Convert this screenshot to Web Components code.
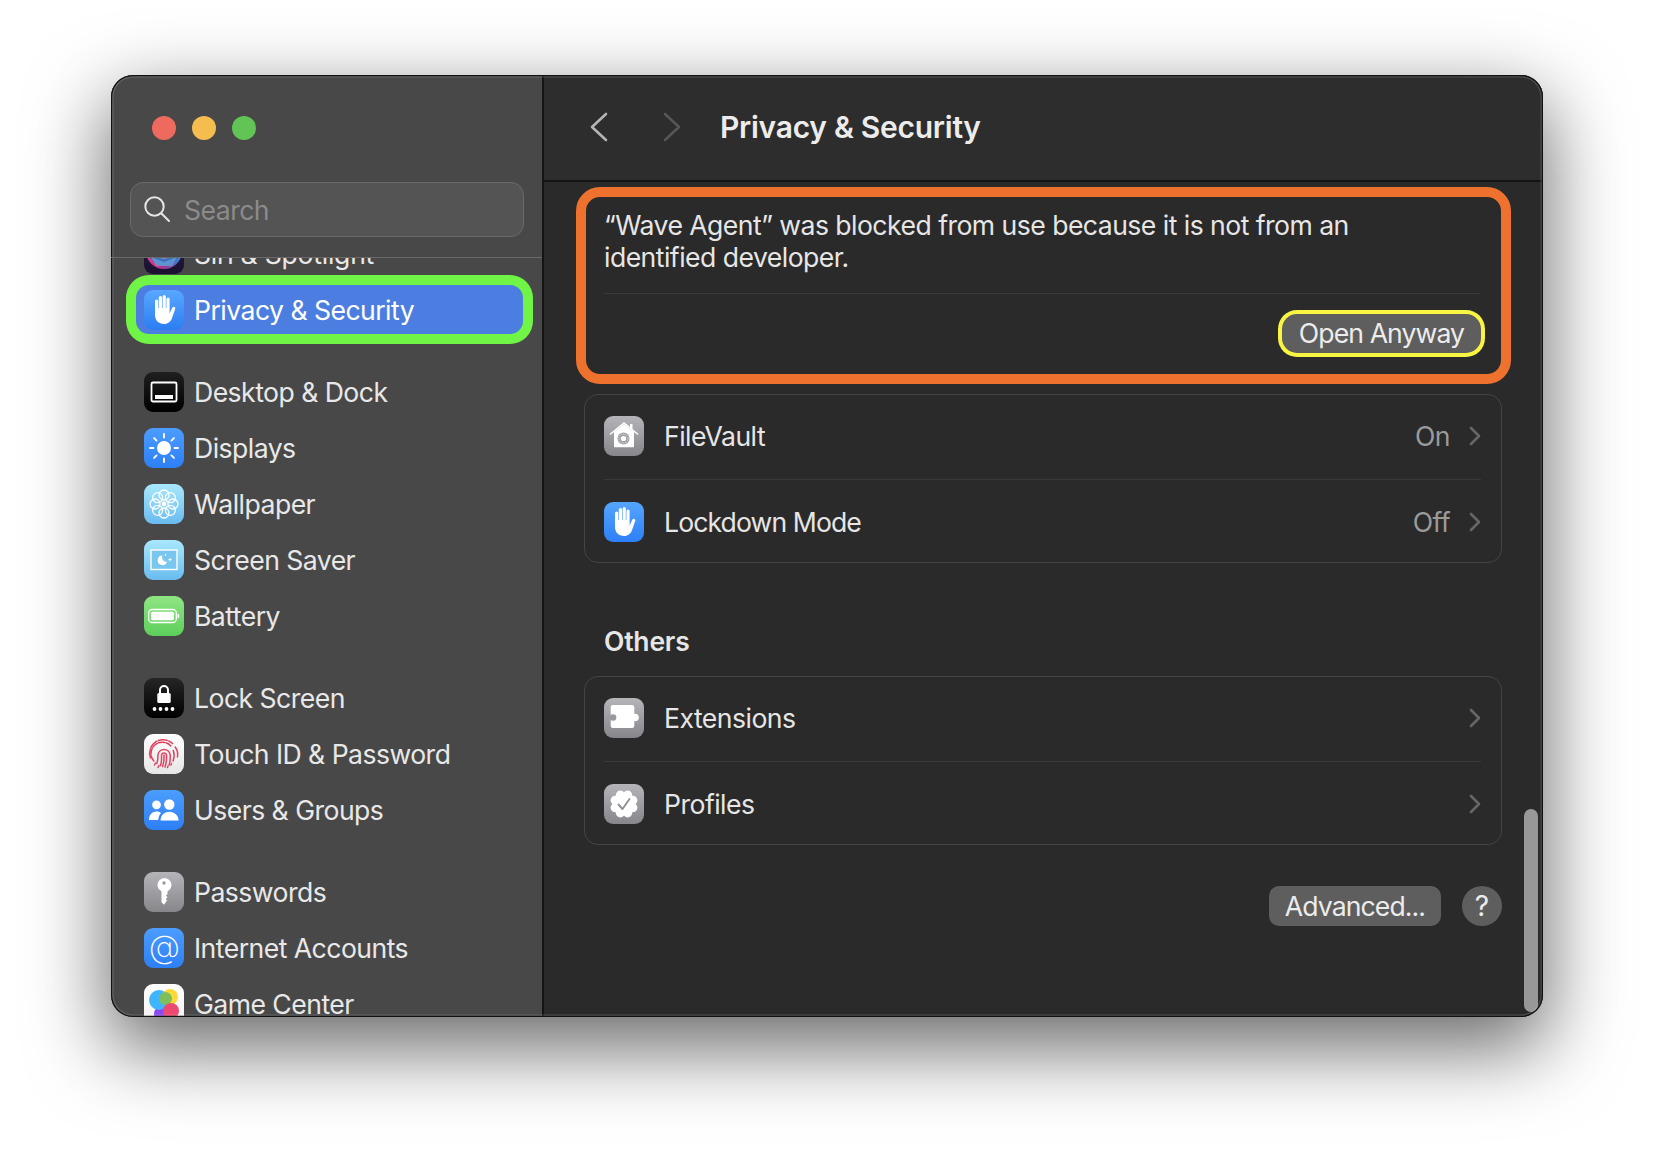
<!DOCTYPE html>
<html lang="en">
<head>
<meta charset="utf-8">
<title>Privacy &amp; Security</title>
<style>
  html, body { margin: 0; height: 100%; background: #fff; overflow: hidden; }
  body {
    font-family: Inter, "Liberation Sans", sans-serif;
    padding: 75px 0 0 111px;
    box-sizing: border-box;
  }
</style>
</head>
<body>
<mac-window>
  <settings-sidebar slot="sidebar">
    <side-group class="scrolled">
      <side-item icon="siri" style="letter-spacing:-.25px">Siri &amp; Spotlight</side-item>
      <side-item icon="hand" selected>Privacy &amp; Security</side-item>
    </side-group>
    <side-group>
      <side-item icon="desktop">Desktop &amp; Dock</side-item>
      <side-item icon="displays">Displays</side-item>
      <side-item icon="wallpaper">Wallpaper</side-item>
      <side-item icon="saver">Screen Saver</side-item>
      <side-item icon="battery">Battery</side-item>
    </side-group>
    <side-group>
      <side-item icon="lock">Lock Screen</side-item>
      <side-item icon="touch">Touch ID &amp; Password</side-item>
      <side-item icon="users">Users &amp; Groups</side-item>
    </side-group>
    <side-group>
      <side-item icon="key">Passwords</side-item>
      <side-item icon="at">Internet Accounts</side-item>
      <side-item icon="game">Game Center</side-item>
    </side-group>
  </settings-sidebar>

  <settings-pane slot="pane" heading="Privacy &amp; Security">
    <alert-card>
      <span slot="message">“Wave Agent” was blocked from use because it is not from an identified developer.</span>
      <push-button slot="action" ring style="letter-spacing:-.9px">Open Anyway</push-button>
    </alert-card>
    <pref-card>
      <pref-row icon="filevault" value="On">FileVault</pref-row>
      <pref-sep></pref-sep>
      <pref-row icon="handblue" value="Off" style="letter-spacing:-.9px">Lockdown Mode</pref-row>
    </pref-card>
    <section-title>Others</section-title>
    <pref-card>
      <pref-row icon="puzzle">Extensions</pref-row>
      <pref-sep></pref-sep>
      <pref-row icon="badge">Profiles</pref-row>
    </pref-card>
    <pane-footer>
      <push-button style="letter-spacing:-.9px">Advanced...</push-button>
      <help-button></help-button>
    </pane-footer>
  </settings-pane>
</mac-window>

<script>
// little helper, every element below is just a template + a shadow root
function makeTemplate(html) {
  const t = document.createElement('template')
  t.innerHTML = html
  return t
}

function simpleElement(name, html) {
  const template = makeTemplate(html)
  customElements.define(name, class extends HTMLElement {
    constructor() {
      super()
      this.attachShadow({ mode: 'open' })
      this.shadowRoot.appendChild(template.content.cloneNode(true))
    }
  })
}

const handPath = 'M11 19.5V11.2a1.6 1.6 0 0 1 3.2 0V18h.6V7.6a1.6 1.6 0 0 1 3.2 0V18h.6V6.6a1.6 1.6 0 0 1 3.2 0V18h.6V9a1.6 1.6 0 0 1 3.2 0V23.4l2.6-5.6c.9-1.9 3.7-.9 3 1.1l-3 8.6C27.1 31.6 24 34 20 34c-5.4 0-9-3.8-9-9z'

const flower = () => {
  let s = ''
  for (let i = 0; i < 8; i++) {
    const a = i * Math.PI / 4
    s += `<circle cx="${20 + 9 * Math.cos(a)}" cy="${20 + 9 * Math.sin(a)}" r="5" fill="none" stroke="#fff" stroke-width="1.3"/>`
  }
  return s + '<circle cx="20" cy="20" r="2.4" fill="#fff"/>'
}

const sunRays = () => {
  let s = ''
  for (let i = 0; i < 8; i++) {
    const a = i * Math.PI / 4
    const c = Math.cos(a), o = Math.sin(a)
    s += `<line x1="${20 + 10.5 * c}" y1="${20 + 10.5 * o}" x2="${20 + 14 * c}" y2="${20 + 14 * o}"/>`
  }
  return s
}

const scallop = () => {
  let s = ''
  for (let i = 0; i < 8; i++) {
    const a = i * Math.PI / 4 + Math.PI / 8
    s += `<circle cx="${20 + 9.5 * Math.cos(a)}" cy="${20 + 9.5 * Math.sin(a)}" r="4.6" fill="#fff"/>`
  }
  return s + '<circle cx="20" cy="20" r="10.5" fill="#fff"/>'
}

// concentric ridges, dashed so they break up like the real print
const fingerprint = `<g fill="none" stroke="#e2425f" stroke-width="1.5" stroke-linecap="round">
  <path d="M6.500 24a13.500 13.500 0 0 1 22-14.500" stroke-dasharray="9 1.600"/>
  <path d="M31.200 13a13.500 13.500 0 0 1 2.300 10"/>
  <path d="M9.800 27a10.600 10.600 0 0 1 17-15" stroke-dasharray="6 1.400"/>
  <path d="M29.300 16.500c1.200 3.500 1 7-.2 10.500"/>
  <path d="M12.800 29.500c1.300-3 1.100-5.500 1.100-8.500a6.200 6.200 0 0 1 12.300 0c.3 3.300 0 6.500-1.100 10"/>
  <path d="M16.500 31.500c1-3 1.200-6.500 1-10.500a2.600 2.600 0 0 1 5 0c.3 4-.2 8-1.500 12"/>
  <path d="M20 21c.2 4-.2 8-1.500 11.500M10.500 31l1-2M14 33.500l1-2M23.500 33.500l.5-1.500M27 31l.5-1.600"/>
</g>`

const blue = ['#4c9dff', '#2d7ff5']
const sky = ['#a9e8fc', '#69bcef']
const gray = ['#b4b4b9', '#86868b']

const ICONS = {
  siri: [['#2a1f44', '#1a1030'], `<defs><linearGradient id="siriEdge" x1="0" y1="0" x2="1" y2="0"><stop offset="0" stop-color="#e0388a"/><stop offset=".5" stop-color="#a4358f"/><stop offset="1" stop-color="#2f86d8"/></linearGradient></defs><circle cx="20" cy="17" r="16.500" fill="#3a6fc4" stroke="url(#siriEdge)" stroke-width="3"/><path d="M7 23l13 5 13-5-5 9H12z" fill="#7fb8d8" opacity=".5"/><circle cx="20" cy="17" r="8" fill="#8d8d95"/>`],
  hand: [['#58a8ff', '#2c7df2'], `<path d="${handPath}" fill="#fff"/>`],
  handblue: [['#55a5ff', '#2d7ff5'], `<path d="${handPath}" fill="#fff"/>`],
  desktop: [['#1f1f1f', '#000'], `<rect x="7.500" y="10.500" width="25" height="19" rx="1.500" fill="none" stroke="#fff" stroke-width="1.800"/><rect x="11" y="23" width="18" height="4" fill="#fff"/>`],
  displays: [blue, `<circle cx="20" cy="20" r="7" fill="#fff"/><g stroke="#fff" stroke-width="1.900" stroke-linecap="round">${sunRays()}</g>`],
  wallpaper: [sky, flower()],
  saver: [sky, `<rect x="7" y="10" width="26" height="19.500" fill="#79c6ee" stroke="#fff" stroke-width="1.400"/><path d="M18.500 15.500a4.800 4.800 0 1 0 4.500 6.300 4.500 4.500 0 0 1-4.500-6.300z" fill="#fff"/><path d="M26 17.500l.6 1.500 1.500.6-1.500.6-.6 1.500-.6-1.500-1.500-.6 1.500-.6zM21.500 13.500l.4 1 1 .4-1 .4-.4 1-.4-1-1-.4 1-.4z" fill="#fff"/>`],
  battery: [['#8fe583', '#5dcf5b'], `<rect x="4.700" y="13.500" width="27.600" height="13" rx="3.500" fill="none" stroke="#fff" stroke-width="1.300"/><rect x="7" y="15.700" width="23" height="8.600" rx="1.600" fill="#fff"/><rect x="33.500" y="17.700" width="1.600" height="4.600" rx=".8" fill="#fff"/>`],
  lock: [['#262626', '#000'], `<path d="M16 16v-4a4 4 0 0 1 8 0v4" fill="none" stroke="#fff" stroke-width="2"/><rect x="13.300" y="15" width="13.400" height="10" rx="1.500" fill="#fff"/><g fill="#fff"><circle cx="10.500" cy="31" r="1.900"/><circle cx="16.500" cy="31" r="1.900"/><circle cx="22.500" cy="31" r="1.900"/><circle cx="28.500" cy="31" r="1.900"/></g>`],
  touch: [['#ffffff', '#e6e6e6'], fingerprint],
  users: [blue, `<g fill="#fff"><circle cx="12.500" cy="14.800" r="4.400"/><circle cx="25.300" cy="14.500" r="5.200"/><path d="M5 30c0-5 3-8.500 7.500-8.500 1.800 0 3.300.5 4.500 1.500-1.700 1.800-2.700 4.300-2.700 7z"/><path d="M16.500 30.500c0-5 3.800-8.700 8.800-8.700s9.300 3.700 9.300 8.700z"/></g>`],
  key: [gray, `<path d="M20 6c4.100 0 7.500 3.100 7.500 7 0 2.700-1.600 5-4 6.200V22l-1.600 1.600 1.600 1.700-1.600 1.700 1.100 1.400-3 4.300-2.500-2.500V19.200c-2.400-1.200-4-3.500-4-6.200 0-3.900 3.400-7 7.500-7z" fill="#fff"/><circle cx="20" cy="11" r="1.700" fill="#9b9ba0"/>`],
  at: [blue, `<text x="20" y="30" text-anchor="middle" font-family="Inter, 'Liberation Sans', sans-serif" font-size="32" font-weight="200" fill="#fff">@</text>`],
  game: [['#ffffff', '#f2f2f2'], `<circle cx="18" cy="30" r="8" fill="#8a48ef"/><circle cx="15" cy="16" r="10" fill="#3fb4ff"/><circle cx="26" cy="13" r="8" fill="#ffd936"/><circle cx="21.500" cy="14.500" r="6.500" fill="#7dbf5c"/><circle cx="27" cy="27" r="8" fill="#ec4a70"/>`],
  filevault: [gray, `<path d="M10 16L20 8l10 8v14.500a.8.8 0 0 1-.8.8H10.800a.8.8 0 0 1-.8-.8z" fill="#fff"/><path d="M6.500 18L20 7l13.500 11" fill="none" stroke="#fff" stroke-width="1.600" stroke-linecap="round"/><rect x="26" y="8" width="2.500" height="5" fill="#fff"/><circle cx="19.500" cy="22.500" r="6" fill="#a0a0a5"/><circle cx="19.500" cy="22.500" r="2.600" fill="#fff"/><circle cx="19.500" cy="22.500" r="4.500" fill="none" stroke="#fff" stroke-width=".7" stroke-dasharray="1 1"/>`],
  puzzle: [gray, `<rect x="6.700" y="7" width="23.600" height="23" rx="2.200" fill="#fff"/><circle cx="31" cy="19.500" r="3.800" fill="#fff"/><circle cx="9" cy="19.500" r="3.300" fill="#98989d"/>`],
  badge: [gray, `${scallop()}<path d="M14.500 20.500l4 4.500 7-10" fill="none" stroke="#909095" stroke-width="1.900" stroke-linecap="round" stroke-linejoin="round"/>`]
}

let iconCount = 0

customElements.define('app-icon', class extends HTMLElement {
  constructor() {
    super()
    this.attachShadow({ mode: 'open' })
  }

  connectedCallback() {
    const [colors, glyph] = ICONS[this.getAttribute('name')]
    const id = 'tile' + iconCount++
    this.shadowRoot.innerHTML = `
      <style>
        :host { display: block; width: 40px; height: 40px; flex: none; }
        svg { display: block; }
      </style>
      <svg width="40" height="40" viewBox="0 0 40 40">
        <defs><linearGradient id="${id}" x1="0" y1="0" x2="0" y2="1">
          <stop offset="0" stop-color="${colors[0]}"/><stop offset="1" stop-color="${colors[1]}"/>
        </linearGradient><clipPath id="${id}c"><rect width="40" height="40" rx="9"/></clipPath></defs>
        <g clip-path="url(#${id}c)">
          <rect width="40" height="40" fill="url(#${id})"/>
          ${glyph}
        </g>
      </svg>`
  }
})

simpleElement('mac-window', `
  <style>
    :host {
      display: flex;
      position: relative;
      width: 1432px;
      height: 942px;
      border-radius: 22px;
      background: #2b2b2b;
      box-shadow: 0 28px 78px 4px rgba(0, 0, 0, .58);
    }
    .clip { display: flex; width: 100%; height: 100%; border-radius: 22px; overflow: hidden; }
    /* dark frame and light hairline, lies over the content */
    .edge {
      position: absolute; inset: 0; border-radius: 22px;
      box-shadow: inset 0 0 0 1.200px #111, inset 0 0 0 2.500px rgba(255, 255, 255, .16);
      pointer-events: none;
    }
  </style>
  <div class="clip">
    <slot name="sidebar"></slot>
    <slot name="pane"></slot>
  </div>
  <div class="edge"></div>
`)

simpleElement('traffic-lights', `
  <style>
    :host { display: flex; gap: 16px; padding: 41px 0 0 41px; }
    i { width: 24px; height: 24px; border-radius: 50%; }
  </style>
  <i style="background:#ee6a5f"></i>
  <i style="background:#f5bd4f"></i>
  <i style="background:#61c454"></i>
`)

simpleElement('search-field', `
  <style>
    :host {
      display: flex; align-items: center; box-sizing: border-box;
      width: 394px; height: 55px; margin: 42px 0 0 19px; padding-left: 13px;
      background: #545454; border: 1px solid #6a6a6a; border-radius: 13px;
      color: #8b8b8b; font-size: 26.600px; letter-spacing: -.54px;
    }
    svg { margin-right: 13px; flex: none; }
  </style>
  <svg width="27" height="27" viewBox="0 0 27 27" fill="none" stroke="#e6e6e6" stroke-width="2" stroke-linecap="round">
    <circle cx="10.500" cy="10.500" r="9.200"/><line x1="17.500" y1="17.500" x2="25" y2="25"/>
  </svg>
  <span>Search</span>
`)

simpleElement('settings-sidebar', `
  <style>
    :host {
      display: flex; flex-direction: column; flex: none; box-sizing: border-box;
      width: 433px; height: 100%;
      background: #484848; border-right: 2px solid #141414;
    }
    .top { height: 183px; box-sizing: border-box; border-bottom: 1.500px solid #696969; flex: none; position: relative; z-index: 1; }
    .list {
      flex: 1; min-height: 0; overflow: hidden;
      padding: 0 0 0 25px;
      display: flex; flex-direction: column; gap: 33px;
    }
    ::slotted(.scrolled) { margin-top: -29px; }
  </style>
  <div class="top">
    <traffic-lights></traffic-lights>
    <search-field></search-field>
  </div>
  <div class="list"><slot></slot></div>
`)

simpleElement('side-group', `
  <style>:host { display: flex; flex-direction: column; gap: 7px; width: 387px; flex: none; }</style>
  <slot></slot>
`)

customElements.define('side-item', class extends HTMLElement {
  constructor() {
    super()
    this.attachShadow({ mode: 'open' })
    this.shadowRoot.innerHTML = `
      <style>
        :host {
          display: flex; align-items: center; gap: 10px; box-sizing: border-box; flex: none;
          height: 49px; padding: 1px 0 0 8px; border-radius: 13px;
          color: #e8e8e8; font-size: 26.600px; letter-spacing: -.54px;
        }
        :host([selected]) {
          background: #4b7ee0; color: #fff;
          box-shadow: 0 0 0 10px #70f546;
        }
      </style>
      <app-icon name="${this.getAttribute('icon')}"></app-icon>
      <span><slot></slot></span>`
  }
})

customElements.define('settings-pane', class extends HTMLElement {
  constructor() {
    super()
    this.attachShadow({ mode: 'open' })
    this.shadowRoot.innerHTML = `
      <style>
        :host { display: flex; flex-direction: column; flex: 1; min-width: 0; height: 100%; position: relative; background: #2a2a2a; }
        header {
          display: flex; align-items: center; box-sizing: border-box; flex: none;
          height: 107px; padding: 0 0 2px 46px;
          background: #2d2d2d; border-bottom: 2px solid #141414;
          color: #ececec; font-size: 30px; font-weight: 600; letter-spacing: -.27px;
        }
        svg { display: block; flex: none; }
        .fwd { margin-left: 55px; margin-right: 39px; }
        .body { flex: 1; min-height: 0; padding: 12px 41px 0 40px; }
        /* overlay scrollbar lies on top of the content */
        .thumb {
          position: absolute; right: 5px; bottom: 5px; width: 14px; height: 203px;
          border-radius: 7px; background: #989898;
        }
      </style>
      <header>
        <svg width="18" height="30" viewBox="0 0 18 30" fill="none" stroke="#b4b4b4" stroke-width="2.600" stroke-linecap="round" stroke-linejoin="round"><path d="M16 2L2 15l14 13"/></svg>
        <svg class="fwd" width="18" height="30" viewBox="0 0 18 30" fill="none" stroke="#565656" stroke-width="2.600" stroke-linecap="round" stroke-linejoin="round"><path d="M2 2l14 13L2 28"/></svg>
        <span>${this.getAttribute('heading').replace('&', '&amp;')}</span>
      </header>
      <div class="body"><slot></slot></div>
      <div class="thumb"></div>`
  }
})

simpleElement('alert-card', `
  <style>
    :host { display: block; position: relative; height: 181px; color: #e6e6e6; font-size: 26.600px; letter-spacing: -.54px; line-height: 32px; }
    .box { box-sizing: border-box; height: 100%; border: 1px solid #444; border-radius: 14px; padding: 13.500px 20px 0 19px; }
    .msg { height: 64px; width: 790px; }
    .sep { height: 1px; background: #3a3a3a; margin: 20.500px 0 20px; }
    .act { display: flex; justify-content: flex-end; }
    /* orange callout painted over the card */
    .ring {
      position: absolute; left: -8px; right: -9px; top: -7px; bottom: -9px;
      border: 10px solid #ee722e; border-radius: 24px; pointer-events: none;
    }
  </style>
  <div class="box">
    <div class="msg"><slot name="message"></slot></div>
    <div class="sep"></div>
    <div class="act"><slot name="action"></slot></div>
  </div>
  <div class="ring"></div>
`)

simpleElement('pref-card', `
  <style>
    :host {
      display: flex; flex-direction: column; box-sizing: border-box;
      height: 169px; margin-top: 19px;
      border: 1px solid #444; border-radius: 14px;
    }
  </style>
  <slot></slot>
`)

simpleElement('pref-sep', `
  <style>:host { display: block; height: 1px; margin: 0 20px 0 19px; background: #3a3a3a; flex: none; }</style>
`)

customElements.define('pref-row', class extends HTMLElement {
  constructor() {
    super()
    this.attachShadow({ mode: 'open' })
    const value = this.getAttribute('value')
    this.shadowRoot.innerHTML = `
      <style>
        :host {
          display: flex; align-items: center; box-sizing: border-box; flex: 1;
          padding: 2px 20px 0 19px; color: #e6e6e6; font-size: 26.600px; letter-spacing: -.54px;
        }
        :host(:first-child) { flex: none; height: 84px; padding-top: 0; padding-bottom: 2px; }
        app-icon { margin-right: 20px; }
        .v { margin-left: auto; color: #9a9a9a; letter-spacing: -.54px; }
        svg { margin-left: 19px; display: block; }
        .none { margin-left: auto; }
      </style>
      <app-icon name="${this.getAttribute('icon')}"></app-icon>
      <span><slot></slot></span>
      ${value ? `<span class="v">${value}</span>` : ''}
      <svg class="${value ? '' : 'none'}" width="12" height="20" viewBox="0 0 12 20" fill="none" stroke="#666" stroke-width="2.600" stroke-linecap="round" stroke-linejoin="round"><path d="M2 2l8 8-8 8"/></svg>`
  }
})

simpleElement('section-title', `
  <style>
    :host { display: block; height: 60px; margin: 48px 0 -14px; padding-left: 20px; color: #e6e6e6; font-size: 26.500px; font-weight: 600; line-height: 60px; letter-spacing: -.2px; }
  </style>
  <slot></slot>
`)

simpleElement('push-button', `
  <style>
    :host {
      display: inline-flex; align-items: center; justify-content: center; box-sizing: border-box;
      width: 172px; height: 40px; border-radius: 10px;
      background: #5e5e5e; color: #ececec; font-size: 26.600px; letter-spacing: -.54px; line-height: 1;
    }
    :host([ring]) {
      height: 39px; width: 199px; border-radius: 15px;
      box-shadow: 0 0 0 4px #f7f542;
    }
  </style>
  <slot></slot>
`)

simpleElement('help-button', `
  <style>
    :host {
      display: flex; align-items: center; justify-content: center;
      width: 40px; height: 40px; border-radius: 50%;
      background: #5e5e5e; color: #ececec; font-size: 28px; line-height: 1;
    }
  </style>
  ?
`)

simpleElement('pane-footer', `
  <style>
    :host { display: flex; justify-content: flex-end; gap: 21px; margin-top: 41px; }
  </style>
  <slot></slot>
`)
</script>
</body>
</html>
